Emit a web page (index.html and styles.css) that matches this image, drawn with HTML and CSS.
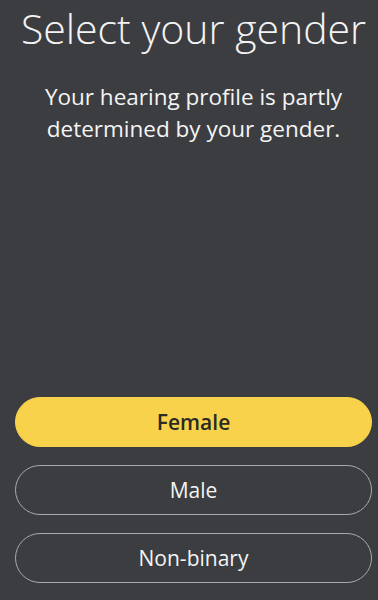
FILE: index.html
```
<!DOCTYPE html>
<html lang="en">
<head>
  <meta charset="UTF-8">
  <meta name="viewport" content="width=device-width, initial-scale=1.0">
  <title>Select your gender</title>
  <link rel="stylesheet" href="styles.css">
</head>
<body>
  <div class="screen">
    <h1 class="title">Select your gender</h1>
    <p class="subtitle">Your hearing profile is partly determined by your gender.</p>

    <div class="options">
      <button class="option option-selected">Female</button>
      <button class="option">Male</button>
      <button class="option">Non-binary</button>
    </div>
  </div>
</body>
</html>
```

FILE: styles.css
```
* {
  box-sizing: border-box;
}

html, body {
  margin: 0;
  background: #3c3d41;
}

.screen {
  height: 600px;
  display: flex;
  flex-direction: column;
  padding: 0 6px 17px 15px;
  font-family: "Open Sans", "Noto Sans", sans-serif;
  color: #f4f4f4;
}

.title {
  margin: 0;
  font-size: 41px;
  font-weight: 300;
  line-height: 56px;
  text-align: center;
  white-space: nowrap;
}

.subtitle {
  margin: 25px 0 0;
  padding: 0 10px;
  font-size: 22.5px;
  line-height: 32px;
  text-align: center;
}

/* buttons sit at the bottom */
.options {
  margin-top: auto;
  display: flex;
  flex-direction: column;
  gap: 18px;
}

.option {
  height: 50px;
  width: 357px;
  border-radius: 25px;
  border: 1px solid #a9aaad;
  background: transparent;
  color: #f4f4f4;
  font-family: inherit;
  font-size: 21px;
}

.option-selected {
  background: #f8d24a;
  border-color: #f8d24a;
  color: #2b2a25;
  font-weight: 600;
}
```
